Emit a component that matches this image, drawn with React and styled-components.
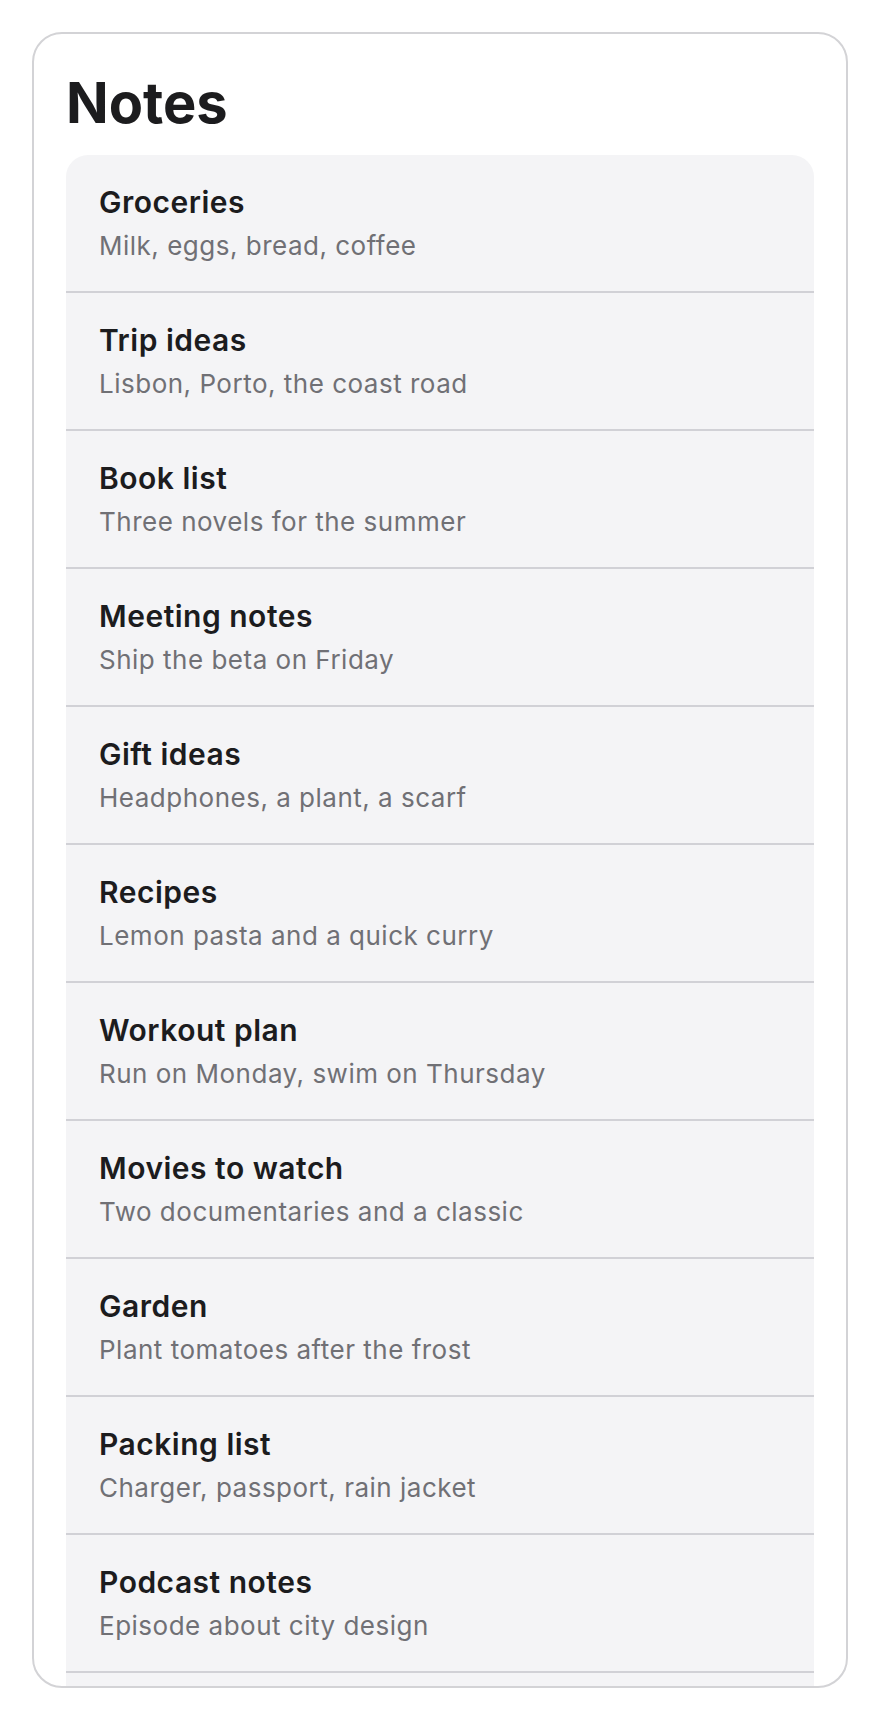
import React from "react";
import styled, { createGlobalStyle } from "styled-components";

const GlobalStyle = createGlobalStyle`
  html, body {
    margin: 0;
    padding: 0;
    background: #ffffff;
  }
  * {
    box-sizing: border-box;
  }
`;

// Page frame around the card
const Page = styled.div`
  padding: 32px;
  font-family: Inter, "Noto Sans", "Liberation Sans", sans-serif;
`;

const Card = styled.section`
  height: 1656px;
  border: 2px solid #d3d3d6;
  border-radius: 30px;
  background: #ffffff;
  padding: 36px 32px 0;
  overflow: hidden;
  display: flex;
  flex-direction: column;
`;

const Title = styled.h1`
  margin: 0 0 18px;
  font-size: 56px;
  line-height: 67px;
  font-weight: 700;
  color: #1c1c1e;
`;

// list keeps going past the card's lower edge, so it just fills the rest
const List = styled.ul`
  flex: 1;
  list-style: none;
  margin: 0;
  padding: 0;
  background: #f4f4f6;
  border-radius: 22px 22px 0 0;
`;

const Row = styled.li`
  display: flex;
  flex-direction: column;
  gap: 9px;
  padding: 29px 33px 28px;
  border-bottom: 2px solid #d1d1d6;
`;

const RowTitle = styled.span`
  font-size: 30px;
  line-height: 36px;
  font-weight: 600;
  letter-spacing: 0.5px;
  color: #1c1c1e;
`;

const RowText = styled.span`
  font-size: 26px;
  line-height: 34px;
  font-weight: 400;
  letter-spacing: 0.5px;
  color: #707075;
`;

const notes = [
  { title: "Groceries", text: "Milk, eggs, bread, coffee" },
  { title: "Trip ideas", text: "Lisbon, Porto, the coast road" },
  { title: "Book list", text: "Three novels for the summer" },
  { title: "Meeting notes", text: "Ship the beta on Friday" },
  { title: "Gift ideas", text: "Headphones, a plant, a scarf" },
  { title: "Recipes", text: "Lemon pasta and a quick curry" },
  { title: "Workout plan", text: "Run on Monday, swim on Thursday" },
  { title: "Movies to watch", text: "Two documentaries and a classic" },
  { title: "Garden", text: "Plant tomatoes after the frost" },
  { title: "Packing list", text: "Charger, passport, rain jacket" },
  { title: "Podcast notes", text: "Episode about city design" },
];

function App() {
  return (
    <Page>
      <GlobalStyle />
      <Card>
        <Title>Notes</Title>
        <List>
          {notes.map((note) => (
            <Row key={note.title}>
              <RowTitle>{note.title}</RowTitle>
              <RowText>{note.text}</RowText>
            </Row>
          ))}
        </List>
      </Card>
    </Page>
  );
}

export default App;
